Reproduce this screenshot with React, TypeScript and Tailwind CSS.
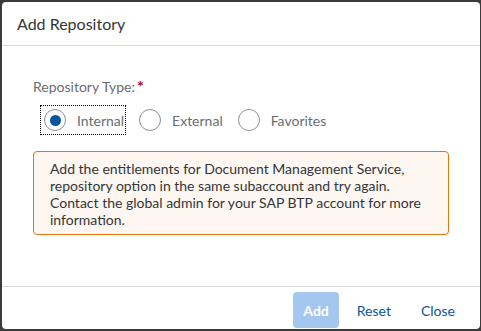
import React, { useState } from 'react';

const OPTIONS = ['Internal', 'External', 'Favorites'];

const Radio: React.FC<{ label: string; checked: boolean; focused: boolean; onSelect: () => void }> = ({
  label,
  checked,
  focused,
  onSelect,
}) => (
  <button
    type="button"
    onClick={onSelect}
    className={`flex items-center h-[28px] pl-[3px] pr-[1px] mr-[11px] ${
      focused ? 'outline outline-1 outline-dotted outline-black' : ''
    }`}
  >
    <span className="w-[22px] h-[22px] rounded-full border border-[#89919a] bg-white flex items-center justify-center">
      {checked && <span className="w-[11px] h-[11px] rounded-full bg-[#0854a0]"></span>}
    </span>
    <span className="ml-[11px] text-[14px] text-[#6a6d70]">{label}</span>
  </button>
);

export default function App() {
  const [selected, setSelected] = useState('Internal');

  return (
    <div
      className="w-[481px] h-[331px] bg-[#3b3b3b] pl-[2px] pt-[2px] pr-[1px] pb-[2px]"
      style={{ fontFamily: 'Lato, "Noto Sans", Arial, sans-serif' }}
    >
      <div className="w-full h-full bg-white rounded-[4px] flex flex-col overflow-hidden">
        {/* Header */}
        <div className="h-[44px] border-b border-[#d9d9d9] flex items-center pl-[15px] shrink-0">
          <h1 className="text-[16px] text-[#32363a]">Add Repository</h1>
        </div>

        {/* Content */}
        <div className="flex-1 px-[31px] pt-[32px]">
          <div className="h-[18px] text-[14px] text-[#6a6d70] leading-[18px]">
            Repository Type:<span className="text-[#bb0000] ml-[2px] text-[16px] leading-[16px] font-bold">*</span>
          </div>
          <div className="flex items-center mt-[10px] ml-[8px]">
            {OPTIONS.map((opt) => (
              <Radio
                key={opt}
                label={opt}
                checked={selected === opt}
                focused={opt === 'Internal'}
                onSelect={() => setSelected(opt)}
              />
            ))}
          </div>
          <div className="mt-[17px] w-[416px] border border-[#e9730c] bg-[#fef7f1] rounded-[4px] pl-[16px] pr-[10px] pt-[8px] pb-[6px] text-[14px] leading-[17px] text-[#32363a]">
            Add the entitlements for Document Management Service,
            <br />
            repository option in the same subaccount and try again.
            <br />
            Contact the global admin for your SAP BTP account for more information.
          </div>
        </div>

        {/* Footer */}
        <div className="h-[43px] border-t border-[#d9d9d9] flex items-start pt-[5px] justify-end gap-[6px] pr-[13px] shrink-0">
          <button
            type="button"
            disabled
            className="h-[36px] px-[10px] rounded-[4px] bg-[#a3c7ee] text-white font-bold text-[14px]"
          >
            Add
          </button>
          <button type="button" className="h-[36px] px-[12px] text-[14px] text-[#0854a0]">
            Reset
          </button>
          <button type="button" className="h-[36px] px-[12px] text-[14px] text-[#0854a0]">
            Close
          </button>
        </div>
      </div>
    </div>
  );
}
